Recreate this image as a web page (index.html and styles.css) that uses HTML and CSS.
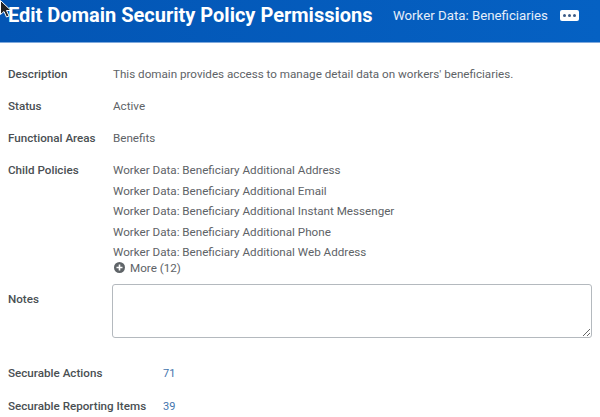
FILE: index.html
```html
<!DOCTYPE html>
<html lang="en">
<head>
<meta charset="utf-8">
<title>Edit Domain Security Policy Permissions</title>
<link rel="stylesheet" href="styles.css">
</head>
<body>
<header class="banner">
  <h1 class="title">Edit Domain Security Policy Permissions</h1>
  <span class="subject">Worker Data: Beneficiaries</span>
  <button class="more-btn" aria-label="More actions"><i></i><i></i><i></i></button>
</header>
<svg class="cursor" width="12" height="18" viewBox="0 0 12 18"><path d="M0.5 0.5V14.5L4 11.5L6.5 17L9 16L6.5 10.5H11Z" fill="#222" stroke="#fff" stroke-width="1"/></svg>
<main class="form">
  <div class="row r-desc"><div class="label">Description</div><div class="value">This domain provides access to manage detail data on workers' beneficiaries.</div></div>
  <div class="row r-status"><div class="label">Status</div><div class="value">Active</div></div>
  <div class="row r-area"><div class="label">Functional Areas</div><div class="value">Benefits</div></div>
  <div class="row r-child">
    <div class="label">Child Policies</div>
    <div class="value">
      <ul class="policies">
        <li>Worker Data: Beneficiary Additional Address</li>
        <li>Worker Data: Beneficiary Additional Email</li>
        <li>Worker Data: Beneficiary Additional Instant Messenger</li>
        <li>Worker Data: Beneficiary Additional Phone</li>
        <li>Worker Data: Beneficiary Additional Web Address</li>
      </ul>
      <div class="more">
        <svg width="11" height="11" viewBox="0 0 11 11"><circle cx="5.5" cy="5.5" r="5.5" fill="#5f6468"/><path d="M5.5 2.5v6M2.5 5.5h6" stroke="#fff" stroke-width="1.6"/></svg>
        <span>More (12)</span>
      </div>
    </div>
  </div>
  <div class="row r-notes"><div class="label">Notes</div><textarea class="notes" aria-label="Notes"></textarea></div>
  <div class="row r-actions"><div class="label">Securable Actions</div><a class="count">71</a></div>
  <div class="row r-items"><div class="label">Securable Reporting Items</div><a class="count">39</a></div>
</main>
</body>
</html>
```
FILE: styles.css
```css
html, body { margin: 0; padding: 0; height: 417px; overflow: hidden; background: #fff; }
body { font-family: Roboto, "Liberation Sans", sans-serif; color: #5e6367; font-size: 11.65px; }
.banner { display: flex; align-items: flex-start; height: 38px; background: linear-gradient(90deg, #0355b4, #0561c3); border-bottom: 1px solid #7fa9dc; padding: 4px 0 0 8px; color: #fff; }
.title { margin: 0; font-size: 20px; line-height: 23px; font-weight: 700; white-space: nowrap; width: 385px; }
.subject { font-size: 13.25px; line-height: 23px; color: #e6eefa; white-space: nowrap; width: 167px; }
.more-btn { width: 19px; height: 11px; margin-top: 6px; padding: 0; border: 0; border-radius: 2px; background: #fff; display: flex; align-items: center; justify-content: center; gap: 2px; }
.more-btn i { width: 3px; height: 3px; border-radius: 50%; background: #3b5a86; }
.cursor { position: absolute; left: 0; top: 0; }
.form { padding: 0 8px; }
.row { display: flex; }
.label { width: 105px; flex: none; font-weight: 500; color: #4a4f53; line-height: 16px; white-space: nowrap; }
.value { line-height: 16px; }
.r-desc { margin-top: 23px; }
.r-status { margin-top: 16px; }
.r-area { margin-top: 16px; }
.r-child { margin-top: 16px; }
.policies { list-style: none; margin: 0; padding: 0; }
.policies li { height: 20.5px; line-height: 16px; white-space: nowrap; }
.more { display: flex; align-items: center; gap: 5px; height: 14px; margin-top: -4px; }
.more svg { margin-left: 1px; }
.r-notes { margin-top: 9px; }
.notes { flex: none; width: 478px; height: 52px; margin: 0 0 0 -1px; padding: 0; border: 1px solid #b4b9be; border-radius: 3px; background: #fff; display: block; }
.r-notes .label { margin-top: 7px; }
.r-actions { margin-top: 27px; }
.r-items { margin-top: 15px; }
.r-actions .label, .r-items .label { width: 155px; }
.count { color: #3f74ad; font-size: 11px; line-height: 18px; }
```
